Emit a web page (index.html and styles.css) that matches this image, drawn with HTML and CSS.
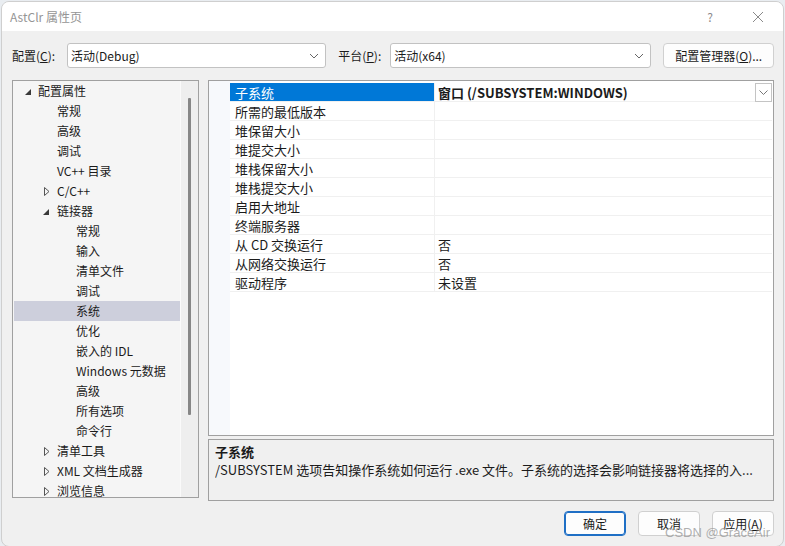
FILE: index.html
```html
<!DOCTYPE html>
<html lang="zh-CN">
<head>
    <meta charset="UTF-8">
    <title>AstClr 属性页</title>
    <link rel="stylesheet" href="styles.css">
</head>
<body>
    <div class="window">
        <div class="titlebar">
            <div class="title">AstClr 属性页</div>
            <div class="title-btn help">?</div>
            <div class="title-btn close">
                <svg width="12" height="12" viewBox="0 0 12 12"><path d="M1 1 L11 11 M11 1 L1 11" stroke="#8a8a8a" stroke-width="1" fill="none"/></svg>
            </div>
        </div>
        <div class="dialog">
            <div class="toolbar">
                <span class="label label-config">配置(<u>C</u>):</span>
                <div class="combo combo-config">
                    <span>活动(Debug)</span>
                    <svg class="chev" width="10" height="6" viewBox="0 0 10 6"><path d="M1 1 L5 5 L9 1" stroke="#666" fill="none"/></svg>
                </div>
                <span class="label label-platform">平台(<u>P</u>):</span>
                <div class="combo combo-platform">
                    <span>活动(x64)</span>
                    <svg class="chev" width="10" height="6" viewBox="0 0 10 6"><path d="M1 1 L5 5 L9 1" stroke="#666" fill="none"/></svg>
                </div>
                <button class="btn btn-manager">配置管理器(<u>O</u>)...</button>
            </div>

            <div class="main">
                <div class="tree">
                    <ul class="tree-list">
                        <li class="lv0"><svg class="arrow" width="6" height="6" viewBox="0 0 6 6"><polygon points="6,0 6,6 0,6" fill="#3a3a3a"/></svg>配置属性</li>
                        <li class="lv1">常规</li>
                        <li class="lv1">高级</li>
                        <li class="lv1">调试</li>
                        <li class="lv1">VC++ 目录</li>
                        <li class="lv1"><svg class="arrow closed" width="6" height="9" viewBox="0 0 6 9"><polygon points="0.5,0.5 5,4.5 0.5,8.5" fill="none" stroke="#555"/></svg>C/C++</li>
                        <li class="lv1"><svg class="arrow" width="6" height="6" viewBox="0 0 6 6"><polygon points="6,0 6,6 0,6" fill="#3a3a3a"/></svg>链接器</li>
                        <li class="lv2">常规</li>
                        <li class="lv2">输入</li>
                        <li class="lv2">清单文件</li>
                        <li class="lv2">调试</li>
                        <li class="lv2 selected">系统</li>
                        <li class="lv2">优化</li>
                        <li class="lv2">嵌入的 IDL</li>
                        <li class="lv2">Windows 元数据</li>
                        <li class="lv2">高级</li>
                        <li class="lv2">所有选项</li>
                        <li class="lv2">命令行</li>
                        <li class="lv1"><svg class="arrow closed" width="6" height="9" viewBox="0 0 6 9"><polygon points="0.5,0.5 5,4.5 0.5,8.5" fill="none" stroke="#555"/></svg>清单工具</li>
                        <li class="lv1"><svg class="arrow closed" width="6" height="9" viewBox="0 0 6 9"><polygon points="0.5,0.5 5,4.5 0.5,8.5" fill="none" stroke="#555"/></svg>XML 文档生成器</li>
                        <li class="lv1"><svg class="arrow closed" width="6" height="9" viewBox="0 0 6 9"><polygon points="0.5,0.5 5,4.5 0.5,8.5" fill="none" stroke="#555"/></svg>浏览信息</li>
                    </ul>
                    <div class="scrollbar"><div class="thumb"></div></div>
                </div>

                <div class="right">
                    <div class="grid">
                        <div class="grid-row active">
                            <div class="name">子系统</div>
                            <div class="value bold">窗口 (/SUBSYSTEM:WINDOWS)
                                <span class="drop">
                                    <svg width="9" height="5" viewBox="0 0 9 5"><path d="M0.5 0.5 L4.5 4.5 L8.5 0.5" stroke="#777" fill="none"/></svg>
                                </span>
                            </div>
                        </div>
                        <div class="grid-row"><div class="name">所需的最低版本</div><div class="value"></div></div>
                        <div class="grid-row"><div class="name">堆保留大小</div><div class="value"></div></div>
                        <div class="grid-row"><div class="name">堆提交大小</div><div class="value"></div></div>
                        <div class="grid-row"><div class="name">堆栈保留大小</div><div class="value"></div></div>
                        <div class="grid-row"><div class="name">堆栈提交大小</div><div class="value"></div></div>
                        <div class="grid-row"><div class="name">启用大地址</div><div class="value"></div></div>
                        <div class="grid-row"><div class="name">终端服务器</div><div class="value"></div></div>
                        <div class="grid-row"><div class="name">从 CD 交换运行</div><div class="value">否</div></div>
                        <div class="grid-row"><div class="name">从网络交换运行</div><div class="value">否</div></div>
                        <div class="grid-row"><div class="name">驱动程序</div><div class="value">未设置</div></div>
                    </div>
                    <div class="desc">
                        <div class="desc-title">子系统</div>
                        <div class="desc-text">/SUBSYSTEM 选项告知操作系统如何运行 .exe 文件。子系统的选择会影响链接器将选择的入...</div>
                    </div>
                </div>
            </div>

            <div class="footer">
                <button class="btn btn-foot default">确定</button>
                <button class="btn btn-foot">取消</button>
                <button class="btn btn-foot">应用(<u>A</u>)</button>
                <div class="watermark">CSDN @GraceAir</div>
            </div>
        </div>
    </div>
</body>
</html>
```

FILE: styles.css
```css
body {
    margin: 0;
    padding: 0;
    background-color: #e9edf1;
    font-family: "Noto Sans CJK SC", "Microsoft YaHei UI", sans-serif;
    font-size: 12px;
    color: #1b1b1b;
    overflow: hidden;
}
.window {
    width: 781px;
    height: 544px;
    margin: 1px 0 0 1px;
    border: 1px solid #cfcfcf;
    border-radius: 8px;
    overflow: hidden;
    background: #f0f0f0;
    display: flex;
    flex-direction: column;
}
.titlebar {
    height: 29px;
    background: #fff;
    display: flex;
    align-items: center;
    padding-left: 8px;
    flex-shrink: 0;
}
.title {
    flex: 1;
    color: #959595;
    font-size: 12px;
    line-height: 16px;
}
.title-btn {
    width: 46px;
    text-align: center;
    color: #8a8a8a;
    display: flex;
    justify-content: center;
    align-items: center;
}
.help {
    font-size: 12px;
    margin-right: 2px;
}
.close {
    margin-right: 2px;
}
.dialog {
    flex: 1;
    padding: 12px 9px 0 10px;
}
.toolbar {
    display: flex;
    align-items: center;
    height: 25px;
}
.label {
    line-height: 16px;
    flex-shrink: 0;
}
.label-config {
    width: 55px;
}
.label-platform {
    width: 52px;
}
.combo {
    height: 23px;
    background: #fff;
    border: 1px solid #c2c2c2;
    border-radius: 3px;
    display: flex;
    align-items: center;
    justify-content: space-between;
    padding: 0 6px 0 3px;
    box-sizing: content-box;
}
.combo span {
    font-size: 12px;
    line-height: 16px;
}
.combo-config {
    width: 249px;
    margin-right: 12px;
}
.combo-platform {
    width: 251px;
}
.btn {
    font-family: inherit;
    font-size: 12px;
    color: #1b1b1b;
    background: #fdfdfd;
    border: 1px solid #d0d0d0;
    border-radius: 4px;
    padding: 0;
    line-height: 16px;
}
.btn-manager {
    width: 111px;
    height: 25px;
    margin-left: 12px;
}
.main {
    display: flex;
    align-items: flex-start;
    margin-top: 12px;
    height: 421px;
}
.tree {
    width: 187px;
    height: 418px;
    box-sizing: border-box;
    border: 1px solid #a0a0a0;
    background: #f5f5f5;
    display: flex;
    overflow: hidden;
}
.tree-list {
    list-style: none;
    margin: 0;
    padding: 0 0 0 1px;
    flex: 1;
}
.tree-list li {
    height: 20px;
    line-height: 20px;
    position: relative;
    white-space: nowrap;
}
.lv0 { padding-left: 24px; }
.lv1 { padding-left: 43px; }
.lv2 { padding-left: 62px; }
.tree-list li.selected {
    background: #cdcfdc;
}
.arrow {
    position: absolute;
    top: 8px;
}
.arrow.closed {
    top: 6px;
}
.lv0 .arrow { left: 11px; }
.lv1 .arrow { left: 29px; }
.lv1 .arrow.closed { left: 30px; }
.scrollbar {
    width: 17px;
    border-left: 1px solid #fafafa;
    background: #eeeeee;
    display: flex;
    justify-content: center;
    padding-top: 17px;
}
.thumb {
    width: 3px;
    height: 317px;
    background: #868686;
    border-radius: 1px;
}
.right {
    margin-left: 9px;
    flex: 1;
    display: flex;
    flex-direction: column;
}
.grid {
    height: 356px;
    box-sizing: border-box;
    border: 1px solid #a0a0a0;
    padding-top: 2px;
    background: linear-gradient(to right, #f7f9fc 21px, #fff 21px);
}
.grid-row {
    display: flex;
    height: 19px;
    line-height: 19px;
    font-size: 13px;
    margin-left: 21px;
    margin-right: 1px;
    border-bottom: 1px solid #f0f0f0;
    box-sizing: border-box;
}
.name {
    width: 205px;
    padding-left: 5px;
    box-sizing: border-box;
    border-right: 1px solid #f0f0f0;
}
.value {
    flex: 1;
    padding-left: 3px;
    position: relative;
}
.bold {
    font-weight: bold;
}
.grid-row.active .name {
    background: #0078d7;
    color: #fff;
}
.drop {
    position: absolute;
    right: 0;
    top: 0;
    width: 15px;
    height: 17px;
    border: 1px solid #c4c4c4;
    background: #fff;
    display: flex;
    align-items: center;
    justify-content: center;
}
.desc {
    margin-top: 3px;
    height: 62px;
    box-sizing: border-box;
    border: 1px solid #a0a0a0;
    padding: 3px 6px 0 6px;
    font-size: 13px;
}
.desc-title {
    font-weight: bold;
    line-height: 18px;
}
.desc-text {
    line-height: 18px;
    white-space: nowrap;
    overflow: hidden;
}
.footer {
    display: flex;
    justify-content: flex-end;
    margin-top: 10px;
    gap: 12px;
    position: relative;
}
.btn-foot {
    width: 62px;
    height: 25px;
}
.btn-foot.default {
    border-color: #1f6fc5;
    box-shadow: inset 0 0 0 1px #1f6fc5;
}
.watermark {
    position: absolute;
    right: 4px;
    top: 14px;
    font-family: "Liberation Sans", Arial, sans-serif;
    font-size: 13px;
    color: rgba(150, 150, 150, 0.75);
    pointer-events: none;
}
```
